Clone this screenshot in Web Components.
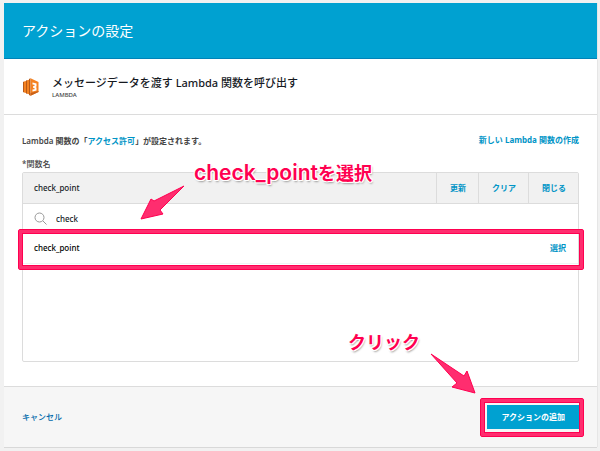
<!DOCTYPE html>
<html lang="ja">
<head>
<meta charset="utf-8">
<meta name="viewport" content="width=device-width, initial-scale=1">
<title>アクションの設定</title>
<style>
    :root {
        --blue: #00a1d1;
        --link: #0094c6;
        --line: #dcdcdc;
        --ink: #16191f;
        --pink: #ff0050;
        --pink-light: #ff2d6f;
    }
    body {
        margin: 0;
        padding: 3px 3px 3px 4px;
        background: #f1f1f1;
        color: var(--ink);
        font: 500 8px/12px "Noto Sans", "Noto Sans CJK JP", sans-serif;
    }
</style>
</head>
<body>
<action-dialog>
    <dialog-header slot="header">アクションの設定</dialog-header>
    <action-summary slot="summary" service="LAMBDA">メッセージデータを渡す Lambda 関数を呼び出す</action-summary>
    <function-picker></function-picker>
    <dialog-footer slot="footer"></dialog-footer>
</action-dialog>

<script>
class ActionDialog extends HTMLElement {
    connectedCallback() {
        this.attachShadow({ mode: 'open' });
        this.shadowRoot.innerHTML = `
            <style>
                :host {
                    display: block;
                    background: #fff;
                    box-shadow: 0 1px 0 #d8d8d8, 1px 0 0 #e6e6e6;
                }
                main {
                    padding: 18px 18px 24px;
                }
            </style>
            <slot name="header"></slot>
            <slot name="summary"></slot>
            <main><slot></slot></main>
            <slot name="footer"></slot>
        `;
    }
}

class DialogHeader extends HTMLElement {
    connectedCallback() {
        this.attachShadow({ mode: 'open' });
        this.shadowRoot.innerHTML = `
            <style>
                :host {
                    display: block;
                    padding: 16px 18px 15px;
                    background: var(--blue);
                    border-bottom: 1px solid #0083b8;
                    color: #fff;
                }
                h1 {
                    margin: 0;
                    font-size: 14px;
                    line-height: 24px;
                    font-weight: 400;
                }
            </style>
            <h1><slot></slot></h1>
        `;
    }
}

class ActionSummary extends HTMLElement {
    connectedCallback() {
        this.attachShadow({ mode: 'open' });
        this.shadowRoot.innerHTML = `
            <style>
                :host {
                    display: flex;
                    align-items: center;
                    gap: 12px;
                    padding: 16px 18px 15px;
                    border-bottom: 1px solid var(--line);
                }
                svg {
                    flex: none;
                }
                h2 {
                    margin: 0;
                    font-size: 11px;
                    line-height: 16px;
                    font-weight: 500;
                }
                p {
                    margin: 0;
                    font-size: 6px;
                    line-height: 8px;
                    color: #444;
                }
            </style>
            <svg width="18" height="18" viewBox="0 0 18 18" aria-hidden="true">
                <path fill="#b85a18" d="M1 4l1-.5v11L1 14zM4 2.500l1.500-.5v14L4 15.500zM7 1l1.500-.8v17.600L7 17z"/>
                <path fill="#f58220" d="M2 3.500l2-.5v12l-2-.5zM5 2.500l2-.8v14.600l-2-.8zM8.500 .2L16.500 4v10l-8 3.800z"/>
                <path fill="#c96018" d="M8.500 15l8-2v1l-8 3.800z"/>
                <path fill="#fff" d="M10.500 4.500l4 1v3l-1 .5 1 .5v3l-4 1v-2l2-.3V10l-1.500-.3V8.300L12.500 8V6.800l-2-.3z"/>
            </svg>
            <div>
                <h2><slot></slot></h2>
                <p>${this.getAttribute('service')}</p>
            </div>
        `;
    }
}

class FunctionPicker extends HTMLElement {
    connectedCallback() {
        this.attachShadow({ mode: 'open' });
        this.shadowRoot.innerHTML = `
            <style>
                :host {
                    display: block;
                }
                a, button {
                    color: var(--link);
                    font-weight: 700;
                    text-decoration: none;
                }
                button, input {
                    margin: 0;
                    padding: 0;
                    border: 0;
                    background: none;
                    font: inherit;
                }
                button {
                    font-weight: 700;
                }
                .intro {
                    display: flex;
                    justify-content: space-between;
                    align-items: center;
                    color: #444;
                }
                .intro p {
                    margin: 2px 0 0;
                    font-weight: 600;
                }
                h3 {
                    margin: 11px 0 2px;
                    font-size: 8px;
                    line-height: 12px;
                    font-weight: 500;
                    color: #444;
                }
                .panel {
                    position: relative;
                    min-height: 190px;
                    border: 1px solid var(--line);
                    border-radius: 2px;
                    box-sizing: border-box;
                }
                .current {
                    display: flex;
                    height: 30px;
                    background: #f1f1f1;
                    border-bottom: 1px solid var(--line);
                }
                .current span {
                    flex: 1;
                    padding: 0 11px;
                    line-height: 30px;
                }
                .current button {
                    padding: 0 12px 0 13px;
                    border-left: 1px solid var(--line);
                }
                .search {
                    display: flex;
                    align-items: center;
                    gap: 9px;
                    height: 29px;
                    padding: 0 11px;
                }
                .search input {
                    flex: 1;
                    min-width: 0;
                    color: inherit;
                    outline: 0;
                }
                ul {
                    margin: 0;
                    padding: 0;
                    list-style: none;
                }
                li {
                    position: relative;
                    display: flex;
                    justify-content: space-between;
                    align-items: center;
                    height: 30px;
                    padding: 0 12px 0 11px;
                    border-bottom: 1px solid #eef4f4;
                    color: #000;
                }
                marker-box {
                    position: absolute;
                    inset: -4px -6px -7px -5px;
                }
                marker-note {
                    position: absolute;
                    left: 171px;
                    top: -13px;
                }
                marker-arrow {
                    position: absolute;
                    left: 117px;
                    top: 12px;
                }
            </style>
            <div class="intro">
                <p>Lambda 関数の「<a href="#permissions">アクセス許可</a>」が設定されます。</p>
                <a href="#create">新しい Lambda 関数の作成</a>
            </div>
            <h3>*関数名</h3>
            <div class="panel">
                <div class="current">
                    <span>check_point</span>
                    <button type="button">更新</button>
                    <button type="button">クリア</button>
                    <button type="button">閉じる</button>
                </div>
                <div class="search">
                    <label for="query">
                        <svg width="13" height="13" viewBox="0 0 13 13" fill="none" stroke="#999" display="block" aria-hidden="true">
                            <circle cx="5.500" cy="5.500" r="4.500"/>
                            <path d="M9 9l3.500 3.500"/>
                        </svg>
                    </label>
                    <input id="query" type="text" value="check" aria-label="関数名" autocomplete="off" spellcheck="false">
                </div>
                <ul>
                    <li>
                        <span>check_point</span>
                        <button type="button">選択</button>
                        <marker-box></marker-box>
                    </li>
                </ul>
                <marker-note>check_point<span slot="ja">を選択</span></marker-note>
                <marker-arrow size="46 36" points="44,1 14,16 11,14 1,34 23,29 20,25"></marker-arrow>
            </div>
        `;
    }
}

class DialogFooter extends HTMLElement {
    connectedCallback() {
        this.attachShadow({ mode: 'open' });
        this.shadowRoot.innerHTML = `
            <style>
                :host {
                    position: relative;
                    display: flex;
                    justify-content: space-between;
                    align-items: center;
                    padding: 18px;
                    background: #f6f6f6;
                    border-top: 1px solid var(--line);
                }
                a {
                    color: #0069aa;
                    text-decoration: none;
                }
                .submit {
                    position: relative;
                }
                button {
                    display: block;
                    height: 24px;
                    margin: 0;
                    padding: 0 14px;
                    border: 0;
                    background: var(--blue);
                    color: #fff;
                    font: inherit;
                    font-weight: 700;
                }
                marker-box {
                    position: absolute;
                    inset: -7px -5px -8px -7px;
                }
                marker-note {
                    position: absolute;
                    right: 177px;
                    top: -58px;
                }
                marker-arrow {
                    position: absolute;
                    right: 120px;
                    top: -34px;
                }
            </style>
            <a href="#cancel">キャンセル</a>
            <div class="submit">
                <button type="button">アクションの追加</button>
                <marker-box></marker-box>
            </div>
            <marker-note><span slot="ja">クリック</span></marker-note>
            <marker-arrow size="47 42" points="1,1 27,30 22,34 45,40 37,18 34,23"></marker-arrow>
        `;
    }
}

// Frame drawn over a control to call attention to it
class MarkerBox extends HTMLElement {
    connectedCallback() {
        this.attachShadow({ mode: 'open' });
        this.shadowRoot.innerHTML = `
            <style>
                :host {
                    display: block;
                    box-sizing: border-box;
                    border: 1px solid var(--pink);
                    border-radius: 2px;
                    box-shadow: inset 0 0 0 3px var(--pink-light), inset 0 0 0 4px var(--pink), 0 0 1px #fff;
                    pointer-events: none;
                }
            </style>
        `;
    }
}

class MarkerNote extends HTMLElement {
    connectedCallback() {
        this.attachShadow({ mode: 'open' });
        this.shadowRoot.innerHTML = `
            <style>
                :host {
                    display: block;
                    color: var(--pink);
                    font: 600 21px/26px Inter, "Noto Sans CJK JP", sans-serif;
                    white-space: nowrap;
                    text-shadow: 1px 0 #fff, -1px 0 #fff, 0 1px #fff, 0 -1px #fff, 1px 1px #fff, -1px -1px #fff, -1px 1px #fff, 1px -1px #fff, 1px 2px 2px #999;
                    pointer-events: none;
                }
                ::slotted(span) {
                    font-size: 18px;
                    font-weight: 700;
                }
            </style>
            <slot></slot><slot name="ja"></slot>
        `;
    }
}

class MarkerArrow extends HTMLElement {
    connectedCallback() {
        const [width, height] = this.getAttribute('size').split(' ');
        this.attachShadow({ mode: 'open' });
        this.shadowRoot.innerHTML = `
            <style>
                :host {
                    display: block;
                    pointer-events: none;
                }
                svg {
                    display: block;
                }
            </style>
            <svg width="${width}" height="${height}" viewBox="0 0 ${width} ${height}" aria-hidden="true">
                <polygon points="${this.getAttribute('points')}" fill="#ff2d6f" stroke="#ff0050" stroke-linejoin="round"/>
            </svg>
        `;
    }
}

customElements.define('marker-box', MarkerBox);
customElements.define('marker-note', MarkerNote);
customElements.define('marker-arrow', MarkerArrow);
customElements.define('action-dialog', ActionDialog);
customElements.define('dialog-header', DialogHeader);
customElements.define('action-summary', ActionSummary);
customElements.define('function-picker', FunctionPicker);
customElements.define('dialog-footer', DialogFooter);
</script>
</body>
</html>
